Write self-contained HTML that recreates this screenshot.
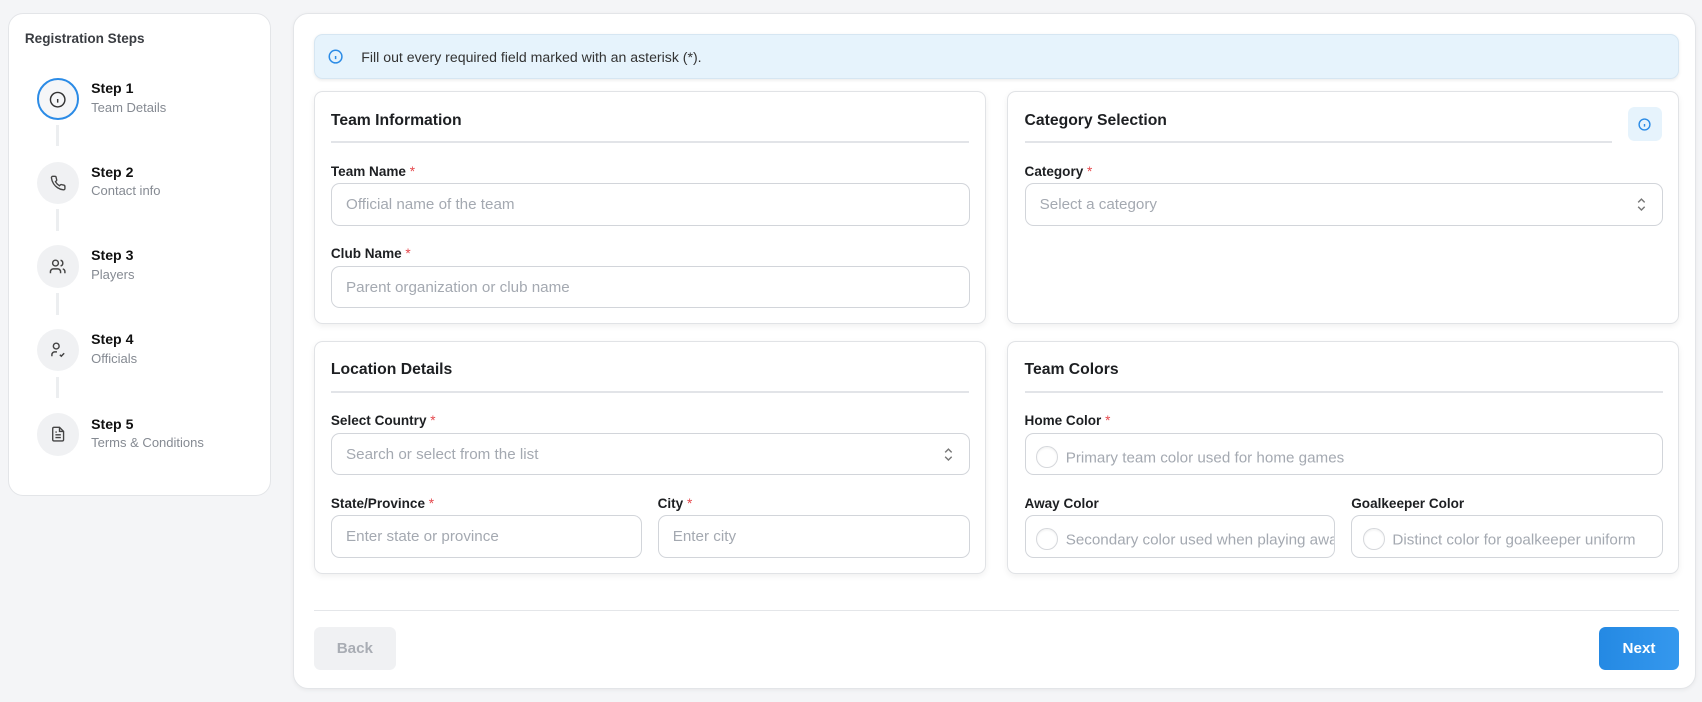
<!DOCTYPE html>
<html><head><meta charset="utf-8"><style>
*{box-sizing:border-box;margin:0;padding:0}
html,body{width:1702px;height:702px;overflow:hidden;background:#f4f5f7;font-family:"Liberation Sans",Arial,sans-serif}
#w{zoom:1.0855;width:1568px;height:647px;position:relative}
.side{position:absolute;left:7px;top:12px;width:243px;height:445px;background:#fff;border:1px solid #e3e5e8;border-radius:14px}
.side h3{position:absolute;left:15px;top:16px;font-size:12.5px;font-weight:700;color:#3a3d42}
.st{position:absolute;left:26px;width:200px;height:40px}
.st .c{position:absolute;left:0;top:0;width:39px;height:39px;border-radius:50%;background:#f0f1f3;display:flex;align-items:center;justify-content:center}
.st .c.a{background:#f5f6f8;border:2px solid #2b8be6}
.st b{position:absolute;left:50px;top:2px;font-size:13px;color:#111}
.st span{position:absolute;left:50px;top:20px;font-size:12px;color:#858a92}
.ln{position:absolute;left:44px;width:2px;height:20px;background:#eceef0}
.main{position:absolute;left:270px;top:12px;width:1292px;height:623px;background:#fff;border:1px solid #e3e5e8;border-radius:14px;box-shadow:0 1px 4px rgba(0,0,0,.05)}
.ban{position:absolute;left:18px;top:18px;width:1258px;height:42px;background:#e6f3fc;border:1px solid #d6e6f2;border-radius:8px;box-shadow:0 1px 3px rgba(0,0,0,.08)}
.ban svg{position:absolute;left:12px;top:13px}
.ban p{position:absolute;left:43px;top:13px;font-size:13px;color:#333}
.card{position:absolute;width:619px;height:215px;background:#fff;border:1px solid #e1e3e6;border-radius:8px;box-shadow:0 2px 6px rgba(0,0,0,.06)}
.card h4{position:absolute;left:15px;top:18px;font-size:14.5px;font-weight:700;color:#1d1f22}
.dv{position:absolute;left:15px;top:45px;height:2px;background:#e2e4e8}
.lb{position:absolute;font-size:12.5px;font-weight:700;color:#1d1f22}
.lb i{color:#e5484d;font-style:normal;font-weight:400}
.in{position:absolute;height:39px;border:1px solid #d2d5da;border-radius:8px;font-size:14px;color:#a4a9b1;padding:11px 0 0 13px;white-space:nowrap;overflow:hidden}
.in .dot{display:inline-block;width:20px;height:20px;border-radius:50%;border:1px solid #d6d8dc;vertical-align:-5px;margin-right:7px;margin-left:-3px;box-shadow:inset 0 1px 2px rgba(0,0,0,.06)}
.chev{position:absolute;right:14px;top:12px}
.btn{position:absolute;top:565px;height:39px;border-radius:6px;font-size:14px;font-weight:700;display:flex;align-items:center;justify-content:center}
</style></head><body><div id="w">
<div class="side">
<h3>Registration Steps</h3>
<div class="st" style="top:59px"><div class="c a"><svg width="16" height="16" viewBox="0 0 24 24" fill="none" stroke="#333" stroke-width="2"><circle cx="12" cy="12" r="10"/><path d="M12 16v-5M12 8h.01"/></svg></div><b>Step 1</b><span>Team Details</span></div>
<div class="ln" style="top:102px"></div>
<div class="st" style="top:136px"><div class="c"><svg width="15" height="15" viewBox="0 0 24 24" fill="none" stroke="#444" stroke-width="2"><path d="M22 16.9v3a2 2 0 0 1-2.2 2 19.8 19.8 0 0 1-8.6-3.1 19.5 19.5 0 0 1-6-6A19.8 19.8 0 0 1 2.1 4.200 2 2 0 0 1 4.1 2h3a2 2 0 0 1 2 1.7c.1 1 .4 1.9.7 2.800a2 2 0 0 1-.5 2.100L8 9.9a16 16 0 0 0 6 6l1.3-1.3a2 2 0 0 1 2.100-.4c.9.3 1.8.6 2.8.7a2 2 0 0 1 1.7 2z"/></svg></div><b>Step 2</b><span>Contact info</span></div>
<div class="ln" style="top:180px"></div>
<div class="st" style="top:213px"><div class="c"><svg width="16" height="16" viewBox="0 0 24 24" fill="none" stroke="#444" stroke-width="2"><path d="M16 21v-2a4 4 0 0 0-4-4H6a4 4 0 0 0-4 4v2"/><circle cx="9" cy="7" r="4"/><path d="M22 21v-2a4 4 0 0 0-3-3.9M16 3.1a4 4 0 0 1 0 7.8"/></svg></div><b>Step 3</b><span>Players</span></div>
<div class="ln" style="top:257px"></div>
<div class="st" style="top:290px"><div class="c"><svg width="16" height="16" viewBox="0 0 24 24" fill="none" stroke="#444" stroke-width="2"><circle cx="10" cy="7" r="4"/><path d="M4 21v-2a4 4 0 0 1 4-4h3M15 19l2 2 4-4"/></svg></div><b>Step 4</b><span>Officials</span></div>
<div class="ln" style="top:334px"></div>
<div class="st" style="top:368px"><div class="c"><svg width="15" height="15" viewBox="0 0 24 24" fill="none" stroke="#444" stroke-width="2"><path d="M14 2H6a2 2 0 0 0-2 2v16a2 2 0 0 0 2 2h12a2 2 0 0 0 2-2V8z"/><path d="M14 2v6h6M16 13H8M16 17H8M10 9H8"/></svg></div><b>Step 5</b><span>Terms &amp; Conditions</span></div>
</div>
<div class="main">
<div class="ban"><svg width="14" height="14" viewBox="0 0 24 24" fill="none" stroke="#2b8be6" stroke-width="2.4"><circle cx="12" cy="12" r="10"/><path d="M12 16v-5M12 8h.01"/></svg><p>Fill out every required field marked with an asterisk (*).</p></div>
<div class="card" style="left:18px;top:71px">
<h4>Team Information</h4><div class="dv" style="width:588px"></div>
<div class="lb" style="left:15px;top:66px">Team Name <i>*</i></div>
<div class="in" style="left:15px;top:84px;width:589px">Official name of the team</div>
<div class="lb" style="left:15px;top:142px">Club Name <i>*</i></div>
<div class="in" style="left:15px;top:160px;width:589px">Parent organization or club name</div>
</div>
<div class="card" style="left:657px;top:71px">
<h4>Category Selection</h4><div class="dv" style="width:541px"></div>
<div style="position:absolute;left:571px;top:14px;width:31px;height:31px;border-radius:6px;background:#e6f3fc;display:flex;align-items:center;justify-content:center"><svg width="12" height="12" viewBox="0 0 24 24" fill="none" stroke="#2b8be6" stroke-width="2.6"><circle cx="12" cy="12" r="10"/><path d="M12 16v-5M12 8h.01"/></svg></div>
<div class="lb" style="left:15px;top:66px">Category <i>*</i></div>
<div class="in" style="left:15px;top:84px;width:588px">Select a category<svg class="chev" width="10" height="14" viewBox="0 0 10 14" fill="none" stroke="#777" stroke-width="1.3"><path d="M2 5l3-3 3 3M2 9l3 3 3-3"/></svg></div>
</div>
<div class="card" style="left:18px;top:301px">
<h4>Location Details</h4><div class="dv" style="width:588px"></div>
<div class="lb" style="left:15px;top:66px">Select Country <i>*</i></div>
<div class="in" style="left:15px;top:84px;width:589px">Search or select from the list<svg class="chev" width="10" height="14" viewBox="0 0 10 14" fill="none" stroke="#777" stroke-width="1.3"><path d="M2 5l3-3 3 3M2 9l3 3 3-3"/></svg></div>
<div class="lb" style="left:15px;top:142px">State/Province <i>*</i></div>
<div class="in" style="left:15px;top:160px;width:287px">Enter state or province</div>
<div class="lb" style="left:316px;top:142px">City <i>*</i></div>
<div class="in" style="left:316px;top:160px;width:288px">Enter city</div>
</div>
<div class="card" style="left:657px;top:301px">
<h4>Team Colors</h4><div class="dv" style="width:588px"></div>
<div class="lb" style="left:15px;top:66px">Home Color <i>*</i></div>
<div class="in" style="left:15px;top:84px;width:588px"><span class="dot"></span>Primary team color used for home games</div>
<div class="lb" style="left:15px;top:142px">Away Color</div>
<div class="in" style="left:15px;top:160px;width:286px"><span class="dot"></span>Secondary color used when playing away</div>
<div class="lb" style="left:316px;top:142px">Goalkeeper Color</div>
<div class="in" style="left:316px;top:160px;width:287px"><span class="dot"></span>Distinct color for goalkeeper uniform</div>
</div>
<div style="position:absolute;left:18px;top:549px;width:1258px;height:1px;background:#e4e6e9"></div>
<div class="btn" style="left:18px;width:76px;background:#f0f1f3;color:#a9adb4">Back</div>
<div class="btn" style="left:1202px;width:74px;background:linear-gradient(90deg,#2489e3,#3598ee);color:#fff">Next</div>
</div>
</div></body></html>
